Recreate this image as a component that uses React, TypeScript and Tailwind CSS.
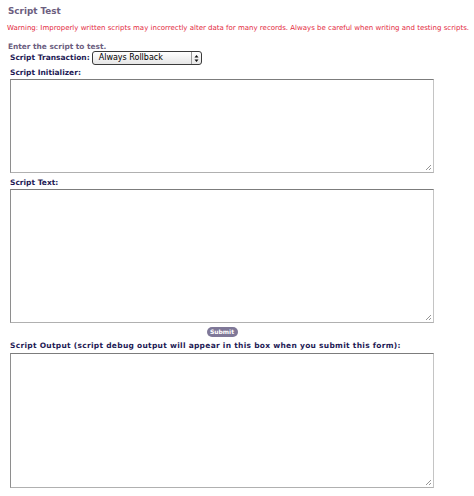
import React from 'react'

const FONT = "font-['DejaVu_Sans',Verdana,sans-serif]"

function ResizeGrip() {
  return (
    <svg width="8" height="8" viewBox="0 0 8 8" className="absolute right-[1px] bottom-[1px]">
      <path d="M7 2 L2 7 M7 5 L5 7" stroke="#8a8a8a" strokeWidth="0.9" />
    </svg>
  )
}

function Area({ h }: { h: string }) {
  return (
    <div
      className={`relative ml-[10px] w-[424px] ${h} border border-t-[#7c7c7c] border-l-[#8e8e8e] border-r-[#c4c4c4] border-b-[#b0b0b0] bg-white`}
    >
      <ResizeGrip />
    </div>
  )
}

function Label({ children, wide }: { children: React.ReactNode; wide?: boolean }) {
  return (
    <p
      className={`ml-[10px] text-[7.5px] leading-[9px] font-bold text-[#1e1a55] whitespace-nowrap ${wide ? 'tracking-[0.28px]' : ''}`}
    >
      {children}
    </p>
  )
}

export default function App() {
  return (
    <div className={`w-[474px] h-[496px] bg-white flex flex-col ${FONT}`}>
      {/* ── Heading ───────────────────────────── */}
      <h1 className="mt-[6px] ml-[8px] text-[8.8px] leading-[10px] font-bold text-[#6c5e80]">
        Script Test
      </h1>
      <p className="mt-[8px] ml-[7px] text-[7px] leading-[8px] text-[#e3283c] whitespace-nowrap">
        Warning: Improperly written scripts may incorrectly alter data for many records. Always be careful when writing and testing scripts.
      </p>
      <p className="mt-[10px] ml-[8px] text-[7.4px] leading-[9px] font-bold text-[#6c5e80]">
        Enter the script to test.
      </p>

      {/* ── Transaction select ─────────────────── */}
      <div className="ml-[10px] flex items-center gap-[2px] h-[14px]">
        <span className="text-[7.5px] font-bold text-[#1e1a55]">Script Transaction:</span>
        <div className="w-[110px] h-[14px] flex items-center rounded-[3px] border border-[#3a3a3a] bg-gradient-to-b from-white to-[#e6e6e6]">
          <span className="flex-1 pl-[6px] text-[8px] leading-[12px] text-black">Always Rollback</span>
          <span className="w-[10px] h-full flex flex-col items-center justify-center border-l border-[#9a9a9a]">
            <svg width="5" height="9" viewBox="0 0 5 9">
              <path d="M0.5 3.5 L2.5 1 L4.5 3.5 Z M0.5 5.5 L2.5 8 L4.5 5.5 Z" fill="#111" />
            </svg>
          </span>
        </div>
      </div>

      <div className="mt-[3px]"><Label>Script Initializer:</Label></div>
      <div className="mt-[2px]"><Area h="h-[94px]" /></div>

      <div className="mt-[5px]"><Label>Script Text:</Label></div>
      <div className="mt-[2px]"><Area h="h-[134px]" /></div>

      {/* ── Submit ─────────────────────────────── */}
      <div className="mt-[4px] ml-[10px] w-[424px] flex justify-center">
        <button className="h-[10px] w-[31px] rounded-full bg-[#7f7898] text-white text-[6px] leading-[10px] font-bold">
          Submit
        </button>
      </div>

      <div className="mt-[4px]">
        <Label wide>Script Output (script debug output will appear in this box when you submit this form):</Label>
      </div>
      <div className="mt-[3px]"><Area h="h-[135px]" /></div>
    </div>
  )
}
